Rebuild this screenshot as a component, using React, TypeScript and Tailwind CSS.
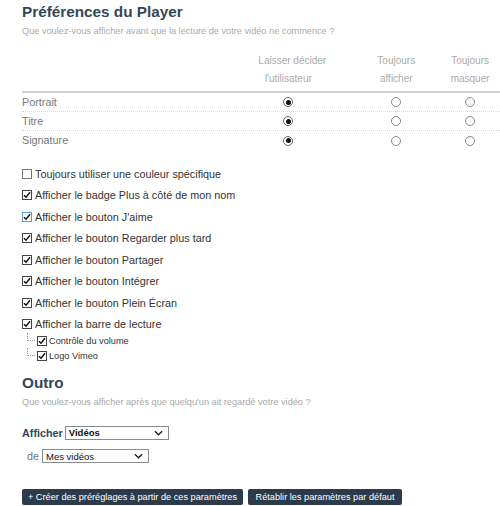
import React from "react";

// Custom checkbox glyph: small square with a black tick
function Check({
  checked,
  focus = false,
  size = 10,
}: {
  checked: boolean;
  focus?: boolean;
  size?: number;
}) {
  return (
    <span
      className={`inline-flex shrink-0 items-center justify-center bg-white border ${
        focus ? "border-[#5b9bd5]" : checked ? "border-[#444]" : "border-[#777]"
      }`}
      style={{ width: size, height: size }}
    >
      {checked && (
        <svg viewBox="0 0 10 10" width={size - 2} height={size - 2}>
          <path d="M1.2 5.2 L3.8 7.8 L8.8 1.6" fill="none" stroke="#111" strokeWidth="1.8" />
        </svg>
      )}
    </span>
  );
}

function Radio({ checked }: { checked: boolean }) {
  return (
    <span
      className={`inline-flex h-[10px] w-[10px] items-center justify-center rounded-full bg-white border ${
        checked ? "border-[#666]" : "border-[#888]"
      }`}
    >
      {checked && <span className="h-[5px] w-[5px] rounded-full bg-[#111]" />}
    </span>
  );
}

function Chevron() {
  return (
    <svg viewBox="0 0 10 6" width="9" height="6" className="shrink-0">
      <path d="M1 1 L5 5 L9 1" fill="none" stroke="#222" strokeWidth="1.6" />
    </svg>
  );
}

function Select({ value, width, bold = false }: { value: string; width: number; bold?: boolean }) {
  return (
    <div
      className="flex h-[14px] items-center justify-between border border-[#8a8a8a] bg-white pl-[3px] pr-[5px]"
      style={{ width }}
    >
      <span className={`text-[9.5px] leading-none text-[#111] ${bold ? "font-bold" : ""}`}>{value}</span>
      <Chevron />
    </div>
  );
}

const rows = ["Portrait", "Titre", "Signature"];

const options: { label: string; checked: boolean; focus?: boolean }[] = [
  { label: "Toujours utiliser une couleur spécifique", checked: false },
  { label: "Afficher le badge Plus à côté de mon nom", checked: true },
  { label: "Afficher le bouton J'aime", checked: true, focus: true },
  { label: "Afficher le bouton Regarder plus tard", checked: true },
  { label: "Afficher le bouton Partager", checked: true },
  { label: "Afficher le bouton Intégrer", checked: true },
  { label: "Afficher le bouton Plein Écran", checked: true },
  { label: "Afficher la barre de lecture", checked: true },
];

const subOptions = ["Contrôle du volume", "Logo Vimeo"];

export default function App() {
  return (
    <div className="h-[506px] w-[500px] overflow-hidden bg-white pl-[22px] pt-[3px] font-['Liberation_Sans',Arial,sans-serif]">
      {/* Player preferences */}
      <h1 className="text-[15.3px] font-bold leading-[18px] text-[#34475a]">Préférences du Player</h1>
      <p className="mt-[4px] text-[9.2px] leading-[12px] text-[#aaa]">
        Que voulez-vous afficher avant que la lecture de votre vidéo ne commence ?
      </p>

      <div className="mt-[15px]">
        <div className="flex border-b-2 border-[#cfcfcf] pb-[3px] text-[10px] leading-[18px] text-[#aaa]">
          <div className="w-[237px]" />
          <div className="w-[60px] whitespace-nowrap text-center">
            Laisser décider
            <br />
            l'utilisateur
          </div>
          <div className="ml-[48px] w-[60px] text-center">
            Toujours
            <br />
            afficher
          </div>
          <div className="ml-[14px] w-[60px] text-center">
            Toujours
            <br />
            masquer
          </div>
        </div>
        {rows.map((row, i) => (
          <div
            key={row}
            className={`flex h-[19px] items-center text-[10.8px] text-[#777] ${
              i < rows.length - 1 ? "border-b border-dotted border-[#d8d8d8]" : ""
            }`}
          >
            <div className="w-[237px]">{row}</div>
            <div className="flex w-[60px] justify-center">
              <Radio checked />
            </div>
            <div className="ml-[48px] flex w-[60px] justify-center">
              <Radio checked={false} />
            </div>
            <div className="ml-[14px] flex w-[60px] justify-center">
              <Radio checked={false} />
            </div>
          </div>
        ))}
      </div>

      {/* Player options */}
      <ul className="mt-[13px]">
        {options.map((opt) => (
          <li key={opt.label} className="flex h-[21.5px] items-center gap-[3px] text-[10.8px] text-[#333]">
            <Check checked={opt.checked} focus={opt.focus} />
            <span>{opt.label}</span>
          </li>
        ))}
      </ul>
      <ul className="-mt-[2px]">
        {subOptions.map((label) => (
          <li key={label} className="flex h-[15px] items-start text-[9.2px] text-[#333]">
            <span className="ml-[5px] h-[8px] w-[8px] shrink-0 border-b border-l border-dotted border-[#999]" />
            <span className="mt-[3px] ml-[2px] flex items-center gap-[2px] leading-[10px]">
              <Check checked size={10} />
              <span>{label}</span>
            </span>
          </li>
        ))}
      </ul>

      {/* Outro */}
      <h2 className="mt-[11px] text-[15.3px] font-bold leading-[18px] text-[#34475a]">Outro</h2>
      <p className="mt-[4px] text-[9.2px] leading-[12px] text-[#aaa]">
        Que voulez-vous afficher après que quelqu'un ait regardé votre vidéo ?
      </p>

      <div className="mt-[17px] flex items-center gap-[2px]">
        <span className="text-[10.8px] font-bold text-[#34475a]">Afficher</span>
        <Select value="Vidéos" width={104} bold />
      </div>
      <div className="mt-[7px] flex items-center gap-[3px] pl-[5px]">
        <span className="text-[10.8px] text-[#777]">de</span>
        <Select value="Mes vidéos" width={107} />
      </div>

      <div className="mt-[25px] flex gap-[5px]">
        <button className="h-[16px] w-[221px] rounded-[2px] bg-[#2c3b4b] text-[9.2px] leading-none text-white">
          + Créer des préréglages à partir de ces paramètres
        </button>
        <button className="h-[16px] w-[154px] rounded-[2px] bg-[#2c3b4b] text-[9.2px] leading-none text-white">
          Rétablir les paramètres par défaut
        </button>
      </div>
    </div>
  );
}
